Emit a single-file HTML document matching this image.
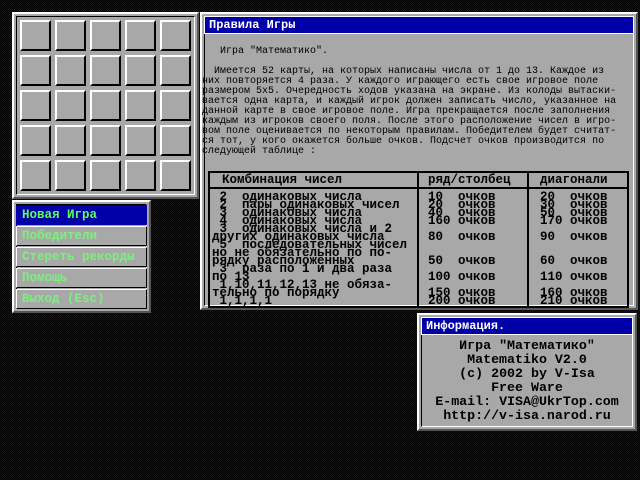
<!DOCTYPE html>
<html><head><meta charset="utf-8"><style>
body{margin:0;width:640px;height:480px;overflow:hidden;position:relative;
background:repeating-conic-gradient(#0000c8 0 25%,#000 0 50%) 0 0/2px 2px;
font-family:"Liberation Mono","DejaVu Sans Mono",monospace;}
.a{position:absolute;box-sizing:border-box}
.pan{background:#a8a8a8;border:2px solid;border-color:#fff #555 #555 #fff}
.pan:after{content:"";position:absolute;left:2px;top:2px;right:2px;bottom:2px;border:1px solid;border-color:#000 #fff #fff #000}
.cell{box-sizing:border-box;width:31px;height:31px;background:#a8a8a8;border:2px solid;border-color:#fff #000 #000 #fff}
.title{background:#0000a8;color:#fff;font-weight:bold;font-size:12px;line-height:16px;padding-left:4px;border:1px solid #fff}
.mi{left:16px;width:131px;height:20px;border:1px solid;border-color:#fff #000 #000 #fff;background:#a8a8a8;color:#5cff5c;font-weight:bold;font-size:12.5px;line-height:18px;padding-left:5px;opacity:1}
.t{font-size:10px;line-height:10px;color:#000;white-space:pre}
.tb{font-size:12.5px;font-weight:bold;line-height:8px;color:#000;white-space:pre}
.inf{font-size:13.3px;font-weight:bold;color:#000;text-align:center;line-height:14px}
</style></head><body>
<div class="a pan" style="left:12px;top:12px;width:187px;height:187px"></div>
<div class="a" style="left:20px;top:20px">
<div style="display:grid;grid-template-columns:repeat(5,31px);grid-auto-rows:31px;gap:4px">
<div class="cell"></div><div class="cell"></div><div class="cell"></div><div class="cell"></div><div class="cell"></div>
<div class="cell"></div><div class="cell"></div><div class="cell"></div><div class="cell"></div><div class="cell"></div>
<div class="cell"></div><div class="cell"></div><div class="cell"></div><div class="cell"></div><div class="cell"></div>
<div class="cell"></div><div class="cell"></div><div class="cell"></div><div class="cell"></div><div class="cell"></div>
<div class="cell"></div><div class="cell"></div><div class="cell"></div><div class="cell"></div><div class="cell"></div>
</div></div>

<div class="a pan" style="left:12px;top:200px;width:139px;height:113px"></div>
<div class="a mi" style="top:205px;background:#0000a8;border-color:#0000a8">Новая Игра</div>
<div class="a mi" style="top:226px;color:#7cf07c">Победители</div>
<div class="a mi" style="top:247px;color:#7cf07c;overflow:hidden;white-space:nowrap">Стереть рекорды</div>
<div class="a mi" style="top:268px;color:#7cf07c">Помощь</div>
<div class="a mi" style="top:289px;color:#7cf07c">Выход (Esc)</div>

<div class="a pan" style="left:200px;top:12px;width:438px;height:298px"></div>
<div class="a title" style="left:204px;top:16px;width:430px;height:18px">Правила Игры</div>
<div class="a t" style="left:202px;top:47px;color:#000">   Игра "Математико".

  Имеется 52 карты, на которых написаны числа от 1 до 13. Каждое из
них повторяется 4 раза. У каждого играющего есть свое игровое поле
размером 5x5. Очередность ходов указана на экране. Из колоды вытаски-
вается одна карта, и каждый игрок должен записать число, указанное на
данной карте в свое игровое поле. Игра прекращается после заполнения
каждым из игроков своего поля. После этого расположение чисел в игро-
вом поле оценивается по некоторым правилам. Победителем будет считат-
ся тот, у кого окажется больше очков. Подсчет очков производится по
следующей таблице :</div>
<div class="a" style="left:208px;top:171px;width:421px;height:137px;border:2px solid #000"></div>
<div class="a" style="left:209px;top:187px;width:419px;height:2px;background:#000"></div>
<div class="a" style="left:417px;top:172px;width:2px;height:135px;background:#000"></div>
<div class="a" style="left:527px;top:172px;width:2px;height:135px;background:#000"></div>
<div class="a tb" style="left:222px;top:176px">Комбинация чисел</div>
<div class="a tb" style="left:428px;top:176px">ряд/столбец</div>
<div class="a tb" style="left:540px;top:176px">диагонали</div>
<div class="a tb" style="left:212px;top:193px"> 2  одинаковых числа
 2  пары одинаковых чисел
 3  одинаковых числа
 4  одинаковых числа
 3  одинаковых числа и 2
другиx одинаковых числа
 5  последовательных чисел
но не обязательно по по-
рядку расположенных
 3  раза по 1 и два раза
по 13
 1,10,11,12,13 не обяза-
тельно по порядку
 1,1,1,1</div>
<div class="a tb" style="left:428px;top:193px">10  очков
20  очков
40  очков
160 очков

80  очков


50  очков

100 очков

150 очков
200 очков</div>
<div class="a tb" style="left:540px;top:193px">20  очков
30  очков
50  очков
170 очков

90  очков


60  очков

110 очков

160 очков
210 очков</div>

<div class="a pan" style="left:417px;top:313px;width:220px;height:118px"></div>
<div class="a title" style="left:421px;top:317px;width:212px;height:18px">Информация.</div>
<div class="a inf" style="left:421px;top:339px;width:212px">Игра "Математико"<br>Matematiko V2.0<br>(c) 2002 by V-Isa<br>Free Ware<br>E-mail: VISA@UkrTop.com<br>http://v-isa.narod.ru</div>
</body></html>
